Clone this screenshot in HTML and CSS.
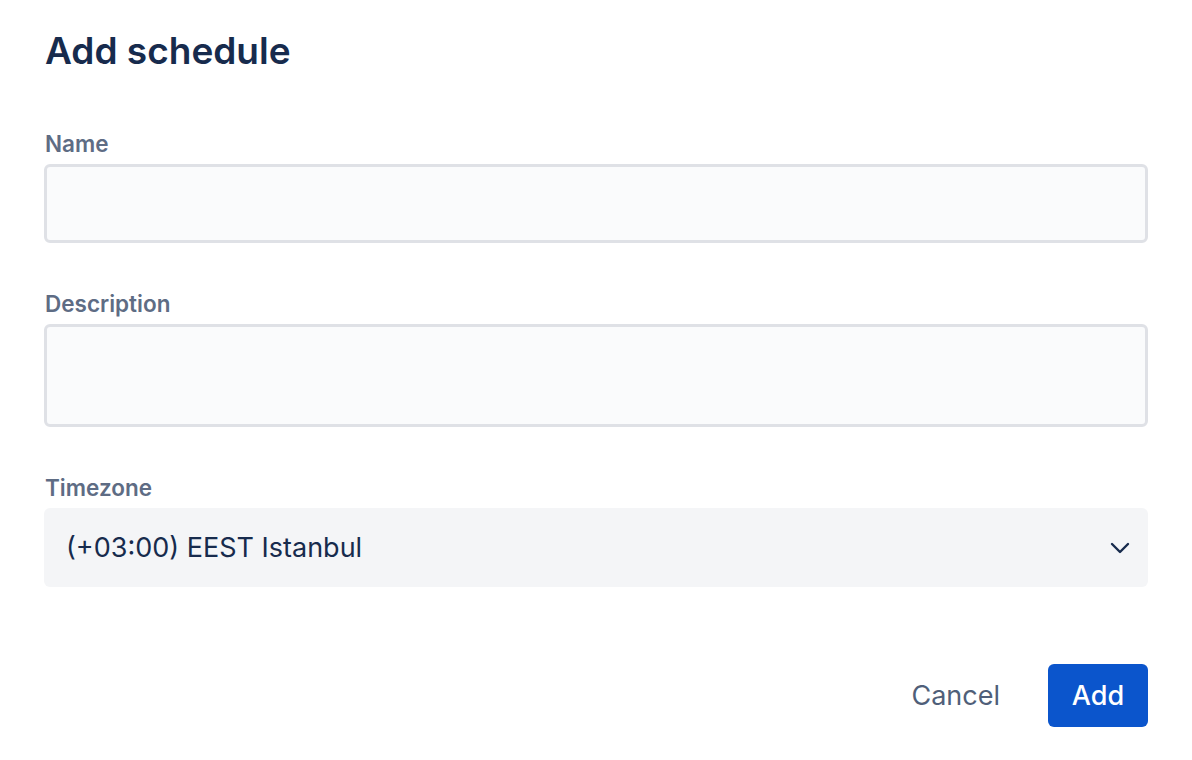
FILE: index.html
```html
<!DOCTYPE html>
<html>
<head>
<meta charset="utf-8">
<link rel="stylesheet" href="styles.css">
</head>
<body>
<div class="dialog">
  <h1 class="title">Add schedule</h1>
  <div class="field field-name">
    <label class="label">Name</label>
    <div class="input"></div>
  </div>
  <div class="field field-desc">
    <label class="label">Description</label>
    <div class="input textarea"></div>
  </div>
  <div class="field field-tz">
    <label class="label">Timezone</label>
    <div class="select">
      <span class="select-value">(+03:00) EEST Istanbul</span>
      <svg class="chevron" width="24" height="24" viewBox="0 0 24 24"><path d="M4 8 L12 16 L20 8" fill="none" stroke="#172b4d" stroke-width="2.4" stroke-linecap="round" stroke-linejoin="round"/></svg>
    </div>
  </div>
  <div class="footer">
    <button class="btn btn-cancel">Cancel</button>
    <button class="btn btn-primary">Add</button>
  </div>
</div>
</body>
</html>
```
FILE: styles.css
```css
html, body {
  margin: 0;
  padding: 0;
  background: #ffffff;
}
body {
  font-family: Inter, "Noto Sans", sans-serif;
  color: #172b4d;
}
.dialog {
  padding: 27px 44px 0 44px;
  display: flex;
  flex-direction: column;
}
.title {
  margin: 0 0 0 1px;
  font-size: 37px;
  font-weight: 600;
  line-height: 48px;
  color: #172b4d;
}
.field {
  display: flex;
  flex-direction: column;
}
.field-name { margin-top: 55px; }
.field-desc { margin-top: 47px; }
.field-tz { margin-top: 47px; }
.label {
  font-size: 22.5px;
  font-weight: 600;
  line-height: 28px;
  color: #5e6c84;
  margin: 0 0 6px 1px;
}
.input {
  height: 73px;
  border: 3px solid #dfe1e6;
  border-radius: 6px;
  background: #fafbfc;
}
.textarea {
  height: 97px;
}
.select {
  height: 79px;
  border-radius: 6px;
  background: #f4f5f7;
  display: flex;
  align-items: center;
  justify-content: space-between;
  padding: 0 16px 0 22px;
}
.select-value {
  font-size: 27px;
  color: #172b4d;
}
.chevron { display: block; }
.footer {
  margin-top: 77px;
  display: flex;
  justify-content: flex-end;
  align-items: center;
  gap: 24px;
}
.btn {
  font-family: Inter, "Noto Sans", sans-serif;
  font-size: 27px;
  border: none;
  border-radius: 6px;
  height: 63px;
  padding: 0 24px;
  cursor: pointer;
}
.btn-cancel {
  background: transparent;
  color: #505f79;
}
.btn-primary {
  background: #0b55cc;
  color: #ffffff;
  width: 100px;
  padding: 0;
  font-weight: 500;
}
```
